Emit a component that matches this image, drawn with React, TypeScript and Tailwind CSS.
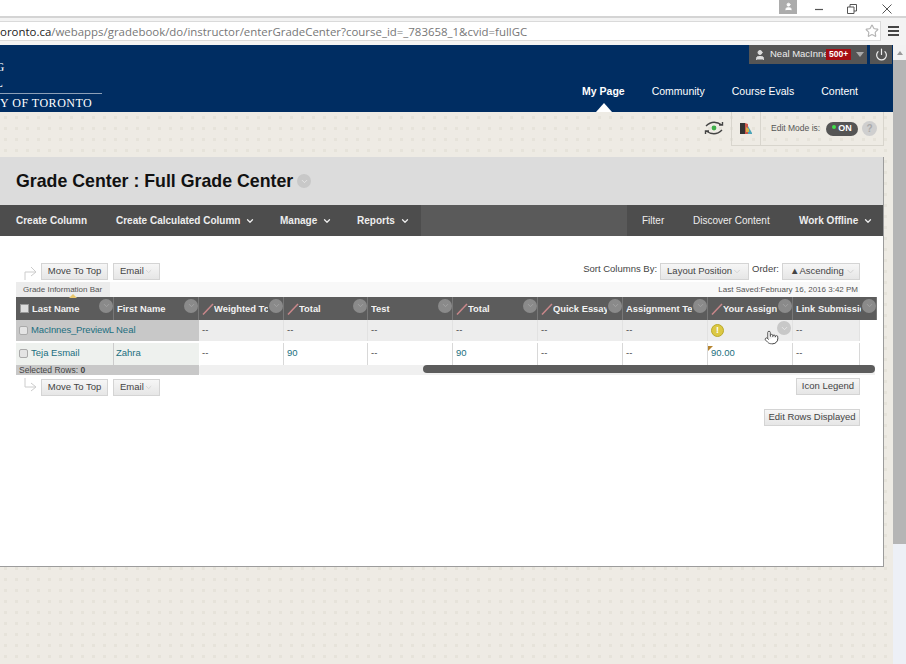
import { ChevronDown, Pointer, Power, Star, User } from "lucide-react";

const columns = [
  { label: "Weighted Tc", pencil: true, row1: "--", row2: "--" },
  { label: "Total", pencil: true, row1: "--", row2: "90" },
  { label: "Test", pencil: false, row1: "--", row2: "--" },
  { label: "Total", pencil: true, row1: "--", row2: "90" },
  { label: "Quick Essay", pencil: true, row1: "--", row2: "--" },
  { label: "Assignment Te", pencil: false, row1: "--", row2: "--" },
  { label: "Your Assign", pencil: true, row1: "", row2: "90.00" },
  { label: "Link Submissic", pencil: false, row1: "--", row2: "--" },
];

const Pencil = () => (
  <svg width="12" height="12" viewBox="0 0 12 12" className="shrink-0">
    <path d="M1 11.5 L11 1" stroke="#c9878a" strokeWidth="1.5" />
  </svg>
);

const MenuCircle = ({ light = false }: { light?: boolean }) => (
  <span
    className={`flex h-[14px] w-[14px] shrink-0 items-center justify-center rounded-full ${
      light ? "bg-[#c8c8c8]" : "bg-[#8a8a8a]"
    }`}
  >
    <ChevronDown size={9} strokeWidth={2} className={light ? "text-[#ececec]" : "text-[#a8a8a8]"} />
  </span>
);

const Button = ({ label, menu = false, className = "" }: { label: string; menu?: boolean; className?: string }) => (
  <div
    className={`flex h-[17px] items-center justify-between border border-[#d4d4d4] bg-gradient-to-b from-[#f6f6f6] to-[#e6e6e6] text-[9.5px] whitespace-nowrap text-[#444] ${className}`}
  >
    <span>{label}</span>
    {menu && <ChevronDown size={11} className="text-[#cfcfcf]" />}
  </div>
);

const HeaderCell = ({ label, pencil, first = false }: { label: string; pencil?: boolean; first?: boolean }) => (
  <div className="flex h-full items-center overflow-hidden border-r border-[#777] pl-[3px]">
    {first && <span className="mr-[3px] ml-[1px] h-[9px] w-[9px] shrink-0 border border-[#999] bg-[#ddd]" />}
    {pencil && <Pencil />}
    <span className="min-w-0 flex-1 overflow-hidden text-[9.4px] leading-[12px] font-bold whitespace-nowrap text-[#f2f2f2]">{label}</span>
    <span className="mb-[6px] ml-[1px]">
      <MenuCircle />
    </span>
  </div>
);

const RowBox = () => <span className="mx-[3px] h-[9px] w-[9px] shrink-0 rounded-[2px] border border-[#aaa] bg-[#e4e4e4]" />;

export default function App() {
  return (
    <div className="flex h-[664px] w-[906px] flex-col overflow-hidden bg-white font-['Liberation_Sans',Arial,sans-serif]">
      {/* browser title bar */}
      <div className="flex h-[18px] shrink-0 items-start justify-end border-b-2 border-[#d4d4d4] bg-white pr-[13px]">
        <div className="flex h-[14px] w-[18px] items-start justify-center bg-[#acacac] pt-[2px]">
          <User size={9} fill="#fff" className="text-white" />
        </div>
        <svg width="12" height="12" viewBox="0 0 12 12" className="mt-[3px] ml-[16px]">
          <path d="M2 6.5 H10" stroke="#555" strokeWidth="1.2" />
        </svg>
        <svg width="12" height="12" viewBox="0 0 12 12" className="mt-[3px] ml-[21px]">
          <path d="M1.5 4 H8 V10.5 H1.5 Z M4 4 V1.5 H10.5 V8 H8" stroke="#555" fill="none" />
        </svg>
        <svg width="12" height="12" viewBox="0 0 12 12" className="mt-[3px] ml-[23px]">
          <path d="M1.5 1.5 L10.5 10.5 M10.5 1.5 L1.5 10.5" stroke="#555" />
        </svg>
      </div>

      {/* address bar */}
      <div className="flex h-[27px] shrink-0 items-center bg-[#f3f3f3] pb-[1px]">
        <div className="flex h-[20px] w-[881px] items-center justify-between overflow-hidden border border-l-0 border-[#dadada] bg-white pr-[1px]">
          <span className="pt-[1px] font-['Open_Sans',sans-serif] text-[11.45px] whitespace-nowrap text-[#777]">
            <span className="text-[#222]">oronto.ca</span>/webapps/gradebook/do/instructor/enterGradeCenter?course_id=_783658_1&amp;cvid=fullGC
          </span>
          <Star size={14} className="text-[#b5b5b5]" />
        </div>
        <div className="ml-[7px] flex w-[11px] flex-col gap-[2px]">
          <span className="h-[2px] bg-[#444]" />
          <span className="h-[2px] bg-[#444]" />
          <span className="h-[2px] bg-[#444]" />
        </div>
      </div>

      <div className="flex min-h-0 flex-1">
        <div className="flex w-[893px] shrink-0 flex-col">
          {/* site header */}
          <div className="h-[67px] shrink-0 bg-[#002d62]">
            <div className="flex h-[19px] items-start justify-end gap-[3px] pr-[1px]">
              <div className="flex h-[19px] w-[118px] items-center bg-[#555] pl-[5px] text-[9.5px] text-[#eee]">
                <User size={12} fill="#ddd" className="mr-[4px] shrink-0 text-[#ddd]" />
                <span className="w-[56px] overflow-hidden whitespace-nowrap">Neal MacInne</span>
                <span className="bg-[#a50d12] px-[3px] text-[8.5px] leading-[11px] font-bold text-white">500+</span>
                <span className="ml-[5px] h-0 w-0 border-x-[4px] border-t-[5px] border-x-transparent border-t-[#aaa]" />
              </div>
              <div className="flex h-[19px] w-[22px] items-center justify-center bg-[#555]">
                <Power size={13} strokeWidth={2.2} className="text-[#eee]" />
              </div>
            </div>
            <div className="flex h-[48px] justify-between">
              <div className="-mt-[7px] w-[102px] overflow-hidden font-['Liberation_Serif',serif] text-white">
                <div className="h-[20px] -translate-x-[5px] text-[13px] leading-[20px]">G</div>
                <div className="h-[11px] -translate-x-[5px] overflow-hidden text-[13px] leading-[11px]">L</div>
                <div className="mt-[5px] border-t border-[#8da0b8] pt-[2px] text-[12px] leading-[14px] tracking-[0.5px] whitespace-nowrap">
                  Y OF TORONTO
                </div>
              </div>
              <nav className="flex items-start pt-[19px] pr-[35px] text-[10.5px] text-white">
                <a className="relative mr-[27px] h-[29px] leading-[16px] font-bold">
                  My Page
                  <span className="absolute top-[20px] left-[14px] h-0 w-0 border-x-[8px] border-b-[9px] border-x-transparent border-b-white" />
                </a>
                <a className="mr-[27px] leading-[16px]">Community</a>
                <a className="mr-[27px] leading-[16px]">Course Evals</a>
                <a className="leading-[16px]">Content</a>
              </nav>
            </div>
          </div>

          {/* page body */}
          <div className="flex min-h-0 flex-1 flex-col bg-[#eeebe4] bg-[radial-gradient(#e6e3da_1.5px,transparent_2px)] bg-size-[11px_11px]">
            {/* edit mode bar */}
            <div className="flex h-[35px] shrink-0 justify-end pr-[9px]">
              <div className="mt-[8px] mr-[7px] flex h-[16px] w-[20px] items-center justify-center">
                <svg width="20" height="16" viewBox="0 0 20 16">
                  <path d="M2 6 Q9 -1 18 5 M15 5 H18.5 V2 M18 10 Q11 17 2 11 M5 11 H1.5 V14" stroke="#444" strokeWidth="1.4" fill="none" />
                  <circle cx="10" cy="8" r="2.4" fill="#3fae49" />
                </svg>
              </div>
              <div className="flex h-[34px] w-[30px] items-center justify-center border-x border-b border-[#d8d5cd]">
                <svg width="12" height="11" viewBox="0 0 12 11">
                  <rect width="5" height="11" fill="#333" />
                  <path d="M5 0 L8 1 L8 11 L5 11 Z" fill="#c9574b" />
                  <path d="M8 3 L12 10 L12 11 L8 11 Z" fill="#4aa3b8" />
                  <path d="M6 4 L9 6 L9 9 L6 9 Z" fill="#d9b24a" />
                </svg>
              </div>
              <div className="flex h-[34px] w-[123px] items-center border-r border-b border-[#d8d5cd] pl-[10px]">
                <span className="w-[55px] text-[8.5px] whitespace-nowrap text-[#555]">Edit Mode is:</span>
                <div className="flex h-[14px] w-[32px] items-center justify-center gap-[2px] rounded-full bg-[#555]">
                  <span className="mb-[3px] h-[4px] w-[4px] rounded-full bg-[#3fe04a]" />
                  <span className="text-[9px] font-bold text-white">ON</span>
                </div>
                <span className="ml-[4px] flex h-[15px] w-[15px] items-center justify-center rounded-full bg-[#cfcfcf] text-[10px] font-bold text-[#aaa]">?</span>
              </div>
            </div>

            {/* content panel */}
            <div className="mt-[10px] flex h-[410px] w-[884px] shrink-0 flex-col border-r border-b border-[#9c9c9c] bg-white">
              <div className="flex h-[48px] shrink-0 items-center bg-[#dcdcdc] pl-[16px]">
                <h1 className="text-[17.75px] font-bold text-[#111]">Grade Center : Full Grade Center</h1>
                <span className="ml-[4px]">
                  <MenuCircle light />
                </span>
              </div>

              <div className="flex h-[31px] shrink-0 items-center bg-[#4d4d4d] pl-[16px] text-[10px] whitespace-nowrap text-[#eee]">
                <span className="w-[100px] font-bold">Create Column</span>
                <span className="flex w-[164px] items-center font-bold">
                  Create Calculated Column
                  <ChevronDown size={10} strokeWidth={3} className="ml-[5px]" />
                </span>
                <span className="flex w-[77px] items-center font-bold">
                  Manage
                  <ChevronDown size={10} strokeWidth={3} className="ml-[5px]" />
                </span>
                <span className="flex w-[64px] items-center font-bold">
                  Reports
                  <ChevronDown size={10} strokeWidth={3} className="ml-[5px]" />
                </span>
                <div className="h-full w-[206px] bg-[#5a5a5a]" />
                <span className="ml-[15px] w-[51px]">Filter</span>
                <span className="w-[106px]">Discover Content</span>
                <span className="flex items-center font-bold">
                  Work Offline
                  <ChevronDown size={10} strokeWidth={3} className="ml-[5px]" />
                </span>
              </div>

              <div className="flex flex-col pl-[16px]">
                <div className="mt-[27px] flex h-[19px] w-[844px] items-start">
                  <svg width="25" height="17" viewBox="0 0 25 17" className="shrink-0">
                    <path d="M9 17 V9 H19 M15 4 L20 9 L15 13" stroke="#ccc" fill="none" />
                  </svg>
                  <Button label="Move To Top" className="w-[67px] justify-center" />
                  <Button label="Email" menu className="ml-[5px] w-[47px] px-[6px]" />
                  <div className="ml-auto flex items-start text-[9.5px] text-[#444]">
                    <span className="mr-[3px] leading-[12px]">Sort Columns By:</span>
                    <Button label="Layout Position" menu className="w-[89px] px-[6px]" />
                    <span className="mx-[3px] leading-[12px]">Order:</span>
                    <Button label="▲Ascending" menu className="w-[78px] pr-[3px] pl-[7px]" />
                  </div>
                </div>

                <div className="flex h-[15px] w-[844px] items-center justify-between bg-[#f8f8f8] text-[8px] text-[#555]">
                  <span className="flex h-full w-[94px] items-center bg-[#ececec] pl-[7px]">Grade Information Bar</span>
                  <span className="pr-[2px]">Last Saved:February 16, 2016 3:42 PM</span>
                </div>

                {/* grade table */}
                <div className="relative h-[23px] w-[861px] bg-[#5c5c5c]">
                  <span className="absolute -top-[3px] left-[53px] h-0 w-0 border-x-[4px] border-b-[4px] border-x-transparent border-b-[#e9c66a]" />
                  <div className="grid h-full grid-cols-[98px_85px_85px_84px_85px_85px_85px_85px_85px_84px]">
                    <HeaderCell label="Last Name" first />
                    <HeaderCell label="First Name" />
                    {columns.map((col, i) => (
                      <HeaderCell key={i} label={col.label} pencil={col.pencil} />
                    ))}
                  </div>
                </div>

                <div className="grid h-[23px] w-[844px] grid-cols-[98px_85px_85px_84px_85px_85px_85px_85px_85px_67px] border-b-2 border-white text-[9.5px] text-[#444]">
                  <div className="flex items-center bg-[#c8c8c8]">
                    <RowBox />
                    <span className="min-w-0 flex-1 overflow-hidden tracking-[-0.15px] whitespace-nowrap text-[#1c6f80]">MacInnes_PreviewL</span>
                  </div>
                  <div className="flex items-center bg-[#c8c8c8] pl-[2px] text-[#1c6f80]">Neal</div>
                  {columns.map((col, i) => (
                    <div key={i} className="relative flex items-center border-r border-[#e2e2e2] bg-[#ededed] pl-[3px]">
                      {col.row1}
                      {col.label === "Your Assign" && (
                        <>
                          <span className="flex h-[13px] w-[13px] items-center justify-center rounded-full border border-[#b9a92c] bg-[#dcc843] text-[9px] font-bold text-white">!</span>
                          <span className="absolute top-[1px] right-[1px]">
                            <MenuCircle light />
                          </span>
                          <Pointer size={15} fill="#fff" strokeWidth={1.3} className="absolute top-[10px] right-[13px] text-[#333]" />
                        </>
                      )}
                    </div>
                  ))}
                </div>

                <div className="grid h-[22px] w-[844px] grid-cols-[98px_85px_85px_84px_85px_85px_85px_85px_85px_67px] text-[9.5px] text-[#444]">
                  <div className="flex items-center border-r border-[#ccc] bg-[#eef1ee] pb-[1px]">
                    <RowBox />
                    <span className="text-[#1c6f80]">Teja Esmail</span>
                  </div>
                  <div className="flex items-center bg-[#eef1ee] pb-[1px] pl-[2px] text-[#1c6f80]">Zahra</div>
                  {columns.map((col, i) => (
                    <div
                      key={i}
                      className={`relative flex items-center border-r border-[#d8d8d8] pb-[1px] pl-[3px] ${
                        col.row2.startsWith("90") ? "text-[#1c6f80]" : ""
                      }`}
                    >
                      {col.row2}
                      {col.row2 === "90.00" && (
                        <span className="absolute top-[3px] left-0 h-0 w-0 border-t-[5px] border-r-[5px] border-t-[#b5842f] border-r-transparent" />
                      )}
                    </div>
                  ))}
                </div>

                <div className="flex h-[10px] w-[859px] items-stretch">
                  <div className="flex w-[183px] items-center bg-[#c8c8c8] pl-[3px] text-[8.5px] text-[#444]">
                    Selected Rows:&nbsp;<b>0</b>
                  </div>
                  <div className="flex-1 rounded-l-[2px] bg-[#f0f0f0]">
                    <div className="ml-[224px] h-[8px] rounded-full bg-[#5c5c5c]" />
                  </div>
                </div>

                <div className="mt-[3px] flex w-[844px] items-start">
                  <svg width="25" height="17" viewBox="0 0 25 17" className="shrink-0">
                    <path d="M9 0 V9 H19 M15 5 L20 9 L15 13" stroke="#ccc" fill="none" />
                  </svg>
                  <Button label="Move To Top" className="mt-[1px] w-[67px] justify-center" />
                  <Button label="Email" menu className="mt-[1px] ml-[5px] w-[47px] px-[6px]" />
                  <Button label="Icon Legend" className="ml-auto w-[64px] justify-center" />
                </div>

                <div className="mt-[13px] flex w-[844px] justify-end">
                  <Button label="Edit Rows Displayed" className="w-[96px] justify-center" />
                </div>
              </div>
            </div>
          </div>
        </div>

        {/* page scrollbar */}
        <div className="flex w-[13px] shrink-0 flex-col bg-[#edf0f6]">
          <div className="flex h-[15px] shrink-0 items-center justify-center bg-[#f2f2f2]">
            <span className="h-0 w-0 border-x-[3px] border-b-[4px] border-x-transparent border-b-[#999]" />
          </div>
          <div className="h-[484px] bg-[#b5b5b5]" />
        </div>
      </div>
    </div>
  );
}
